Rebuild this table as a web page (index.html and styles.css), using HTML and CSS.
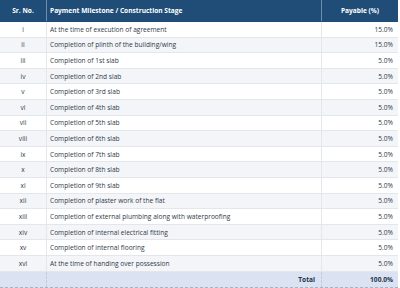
FILE: index.html
```html
<!DOCTYPE html>
<html>
<head>
<meta charset="utf-8">
<link rel="stylesheet" href="styles.css">
</head>
<body>
<div class="tbl">
  <div class="row head">
    <div class="c sr">Sr. No.</div>
    <div class="c st">Payment Milestone / Construction Stage</div>
    <div class="c pc">Payable (%)</div>
  </div>
  <div class="row"><div class="c sr">i</div><div class="c st">At the time of execution of agreement</div><div class="c pc r">15.0%</div></div>
  <div class="row alt"><div class="c sr">ii</div><div class="c st">Completion of plinth of the building/wing</div><div class="c pc r">15.0%</div></div>
  <div class="row"><div class="c sr">iii</div><div class="c st">Completion of 1st slab</div><div class="c pc r">5.0%</div></div>
  <div class="row alt"><div class="c sr">iv</div><div class="c st">Completion of 2nd slab</div><div class="c pc r">5.0%</div></div>
  <div class="row"><div class="c sr">v</div><div class="c st">Completion of 3rd slab</div><div class="c pc r">5.0%</div></div>
  <div class="row alt"><div class="c sr">vi</div><div class="c st">Completion of 4th slab</div><div class="c pc r">5.0%</div></div>
  <div class="row"><div class="c sr">vii</div><div class="c st">Completion of 5th slab</div><div class="c pc r">5.0%</div></div>
  <div class="row alt"><div class="c sr">viii</div><div class="c st">Completion of 6th slab</div><div class="c pc r">5.0%</div></div>
  <div class="row"><div class="c sr">ix</div><div class="c st">Completion of 7th slab</div><div class="c pc r">5.0%</div></div>
  <div class="row alt"><div class="c sr">x</div><div class="c st">Completion of 8th slab</div><div class="c pc r">5.0%</div></div>
  <div class="row"><div class="c sr">xi</div><div class="c st">Completion of 9th slab</div><div class="c pc r">5.0%</div></div>
  <div class="row alt"><div class="c sr">xii</div><div class="c st">Completion of plaster work of the flat</div><div class="c pc r">5.0%</div></div>
  <div class="row"><div class="c sr">xiii</div><div class="c st">Completion of external plumbing along with waterproofing</div><div class="c pc r">5.0%</div></div>
  <div class="row alt"><div class="c sr">xiv</div><div class="c st">Completion of internal electrical fitting</div><div class="c pc r">5.0%</div></div>
  <div class="row"><div class="c sr">xv</div><div class="c st">Completion of internal flooring</div><div class="c pc r">5.0%</div></div>
  <div class="row alt"><div class="c sr">xvi</div><div class="c st">At the time of handing over possession</div><div class="c pc r">5.0%</div></div>
  <div class="row total"><div class="c sr"></div><div class="c st r">Total</div><div class="c pc r">100.0%</div></div>
</div>
</body>
</html>
```
FILE: styles.css
```css
html, body {
  margin: 0;
  padding: 0;
  background: #ffffff;
}
body {
  font-family: "Open Sans", "Noto Sans", sans-serif;
  font-size: 6.6px;
  color: #2f3a47;
}
.tbl {
  width: 398px;
  display: flex;
  flex-direction: column;
}
.row {
  display: grid;
  grid-template-columns: 47px 275px 76px;
  height: 15.6px;
  flex: none;
  border-bottom: 1px solid #e3e6ea;
  box-sizing: border-box;
  background: #ffffff;
}
.row.alt {
  background: #f3f5f9;
}
.c {
  display: flex;
  align-items: center;
  padding: 0 4px;
  white-space: nowrap;
  overflow: hidden;
}
.sr {
  justify-content: center;
  border-right: 1px solid #e3e6ea;
}
.st {
  padding-left: 3px;
  border-right: 1px solid #e3e6ea;
}
.pc {
  justify-content: center;
}
.r {
  justify-content: flex-end;
}
.pc.r {
  padding-right: 5px;
}
.head {
  height: 22px;
  background: #1f4d78;
  color: #ffffff;
  font-weight: 700;
  border-bottom: 1px solid #1f4d78;
}
.head .sr, .head .st {
  border-right: 1px solid #6f8fae;
}
.total {
  height: 16px;
  background: #dbe2f1;
  font-weight: 700;
  color: #22344a;
  border-bottom: 1px dashed #a9b2c0;
}
.total .sr, .total .st {
  border-right: 1px dashed #c5cde0;
}
.total .st {
  padding-right: 6px;
}
```
